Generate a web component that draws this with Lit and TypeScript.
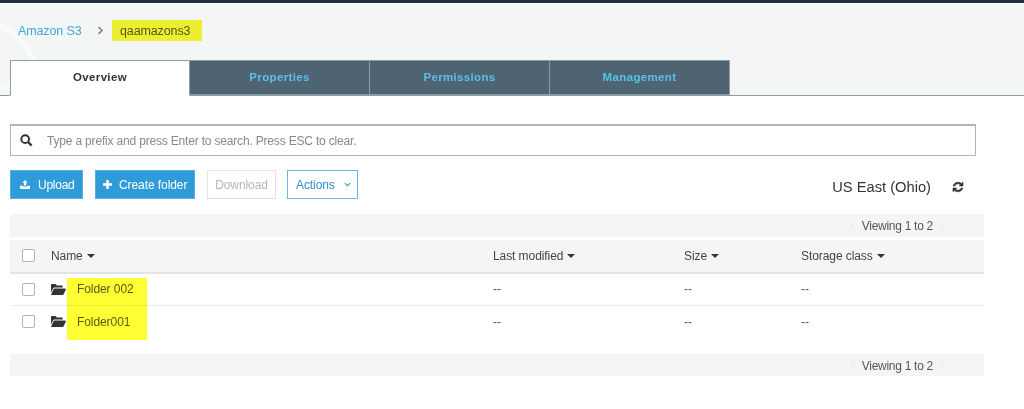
import { LitElement, html, css } from "lit";
import { customElement } from "lit/decorators.js";

const caret = html`<svg class="caret" width="8" height="4" viewBox="0 0 8 4"><path d="M0 0h8L4 4z" fill="#333"/></svg>`;
const folder = html`<svg class="folder" width="15" height="11" viewBox="0 0 15 11"><path d="M0 1.2C0 .5.5 0 1.2 0h3c.6 0 1 .4 1.2 1l.2.5h5c.7 0 1.1.4 1.1 1V3.6H3.6C2.9 3.6 2.3 4 2 4.6L0 8.6z" fill="#333"/><path d="M3.5 4.6H14c.7 0 1.1.6.8 1.2l-2.2 4.4c-.2.5-.7.8-1.2.8H.9c-.6 0-.9-.5-.6-1l2.2-4.7c.2-.4.6-.7 1-.7z" fill="#333"/></svg>`;

@customElement("app-root")
export class AppRoot extends LitElement {
  static styles = css`
    :host { display: block; width: 1024px; height: 409px; overflow: hidden; background: #fff; font-family: "Liberation Sans", Arial, sans-serif; color: #444; position: relative; }
    .topbar { height: 3px; background: #232f3e; }
    .head { background: #f4f6f6; height: 93px; box-sizing: border-box; display: flex; flex-direction: column; border-bottom: 1px solid #8d9ba5; position: relative; }
    .swoosh { position: absolute; left: 0; top: 0; }
    .crumbs { display: flex; align-items: center; height: 57px; padding: 0 0 2px 18px; font-size: 12.5px; letter-spacing: -.12px; box-sizing: border-box; position: relative; }
    .crumbs a { color: #44a5de; width: 79px; }
    .crumbs .sep { width: 15px; display: flex; }
    .crumbs .bucket { color: #5a5a5a; padding-left: 8px; }
    .tabs { display: flex; padding-left: 10px; height: 36px; margin-bottom: -1px; position: relative; }
    .tab { box-sizing: border-box; width: 180px; height: 35px; background: #4f6472; color: #59c1e8; border: 1px solid #8d9ba5; border-left: 0; font-size: 11.5px; font-weight: bold; letter-spacing: .35px; display: flex; align-items: center; justify-content: center; padding-bottom: 2px; }
    .tab.active { background: #fff; color: #333; height: 36px; border: 1px solid #8d9ba5; border-bottom: 1px solid #fff; }
    .search { margin: 28px 48px 0 10px; height: 32px; box-sizing: border-box; border: 1px solid #b4b4b4; border-top-width: 2px; display: flex; align-items: center; padding-left: 9px; font-size: 12px; letter-spacing: -.18px; color: #888; gap: 14.5px; }
    .toolbar { display: flex; align-items: center; margin: 14px 0 0 10px; height: 29px; width: 954px; }
    .btn { box-sizing: border-box; height: 29px; display: flex; align-items: center; font-size: 12px; letter-spacing: -.08px; }
    .primary { background: #2f9bd9; color: #fff; border: 1px solid #5aafe0; }
    .upload { width: 73px; margin-right: 12px; padding-left: 9px; gap: 8px; letter-spacing: -.25px; }
    .create { width: 100px; margin-right: 12px; padding-left: 7px; gap: 7px; }
    .dl { width: 69px; border: 1px solid #e3e3e3; color: #b5b5b5; margin-right: 11px; justify-content: center; }
    .actions { width: 71px; border: 1px solid #6cb6e4; color: #2f8fcf; gap: 9px; padding-left: 8px; }
    .region { margin-left: auto; font-size: 14.7px; color: #333; display: flex; align-items: center; gap: 21px; padding: 5px 0 0 0; }
    .pager { margin: 15px 40px 0 10px; height: 23px; background: #f4f6f6; display: flex; align-items: center; justify-content: flex-end; font-size: 12px; letter-spacing: -.28px; color: #555; padding-right: 39px; gap: 5px; box-sizing: border-box; }
    .pager svg { display: block; }
    .table { margin: 3px 40px 0 10px; font-size: 12px; letter-spacing: -.08px; color: #444; }
    .row { display: grid; grid-template-columns: 41px 442px 191px 117px 1fr; align-items: center; box-sizing: border-box; }
    .row.header { height: 34px; background: #f4f6f6; border-bottom: 2px solid #e2e4e4; padding-bottom: 1px; }
    .row.item { height: 32px; border-bottom: 1px solid #eaeaea; color: #444; padding-bottom: 1px; }
    .row.item:last-child { border-bottom: 0; }
    .check { width: 13px; height: 13px; margin-left: 12px; box-sizing: border-box; border: 1.5px solid #b4b4b4; border-radius: 2px; background: #fff; }
    .cell { display: flex; align-items: center; gap: 4px; }
    .name { gap: 11px; }
    .name span { color: #5a5a5a; }
    .dash { color: #555; }
    .pager.bottom { margin-top: 16px; height: 22px; padding-top: 1px; }
    .hl { position: absolute; background: #ffff33; mix-blend-mode: multiply; }
    .hl.one { left: 112px; top: 20px; width: 90px; height: 21px; background: #f7f733; }
    .hl.two { left: 67px; top: 278px; width: 80px; height: 62px; }
  `;

  private row(name: string) {
    return html`<div class="row item">
      <span class="check"></span>
      <span class="cell name">${folder}<span>${name}</span></span>
      <span class="dash">--</span><span class="dash">--</span><span class="dash">--</span>
    </div>`;
  }

  private pager(extra = "") {
    const ch = (d: string) => html`<svg width="7" height="11" viewBox="0 0 7 11"><path d="${d}" fill="none" stroke="#eceeee" stroke-width="1.4"/></svg>`;
    return html`<div class="pager ${extra}">${ch("M5.5 1 1.5 5.5 5.5 10")}<span>Viewing 1 to 2</span>${ch("M1.5 1 5.5 5.5 1.5 10")}</div>`;
  }

  render() {
    return html`
      <div class="topbar"></div>
      <div class="head">
        <svg class="swoosh" width="60" height="92" viewBox="0 0 60 92"><path d="M0 22C14 30 26 42 34 57M0 86 12 80" fill="none" stroke="#fff" stroke-opacity=".45" stroke-width="5"/></svg>
        <div class="crumbs">
          <a>Amazon S3</a>
          <span class="sep"><svg width="7" height="9" viewBox="0 0 7 9"><path d="M1.500 1 5 4.500 1.500 8" fill="none" stroke="#777" stroke-width="1.400"/></svg></span>
          <span class="bucket">qaamazons3</span>
        </div>
        <div class="tabs">
          <div class="tab active">Overview</div>
          <div class="tab">Properties</div>
          <div class="tab">Permissions</div>
          <div class="tab">Management</div>
        </div>
      </div>
      <div class="search">
        <svg width="12.500" height="12.500" viewBox="0 0 14 14"><circle cx="5.800" cy="5.800" r="4.300" fill="none" stroke="#333" stroke-width="2.200"/><path d="M9 9l4 4" stroke="#333" stroke-width="2.600"/></svg>
        <span>Type a prefix and press Enter to search. Press ESC to clear.</span>
      </div>
      <div class="toolbar">
        <div class="btn primary upload"><svg width="10" height="11" viewBox="0 0 13 12"><path d="M6.500 0 10 3.600H8v3.600H5V3.600H3z" fill="#fff"/><path d="M0 7.500h3.800v1h5.400v-1H13V11c0 .6-.4 1-1 1H1c-.6 0-1-.4-1-1z" fill="#fff"/></svg><span>Upload</span></div>
        <div class="btn primary create"><svg width="9" height="9" viewBox="0 0 11 11"><path d="M4 0h3v4h4v3H7v4H4V7H0V4h4z" fill="#fff"/></svg><span>Create folder</span></div>
        <div class="btn dl">Download</div>
        <div class="btn actions"><span>Actions</span><svg width="7" height="5" viewBox="0 0 8 5"><path d="M1 1l3 3 3-3" fill="none" stroke="#2f8fcf" stroke-width="1.200"/></svg></div>
        <div class="region"><span>US East (Ohio)</span><svg width="12" height="12" viewBox="0 0 12 12"><path d="M1.200 5C1.700 2.700 3.700 1.200 6 1.200c1.400 0 2.600.5 3.500 1.400L11 1.200V5H7.300l1.200-1.200C7.800 3.200 7 2.800 6 2.800 4.500 2.800 3.200 3.700 2.800 5zM10.800 7c-.5 2.300-2.500 3.800-4.800 3.800-1.400 0-2.600-.5-3.500-1.400L1 10.800V7h3.700L3.500 8.200c.7.6 1.500 1 2.500 1 1.500 0 2.800-.9 3.200-2.200z" fill="#333" stroke="#333" stroke-width=".6"/></svg></div>
      </div>
      ${this.pager()}
      <div class="table">
        <div class="row header">
          <span class="check"></span>
          <span class="cell">Name ${caret}</span>
          <span class="cell">Last modified ${caret}</span>
          <span class="cell">Size ${caret}</span>
          <span class="cell">Storage class ${caret}</span>
        </div>
        ${this.row("Folder 002")}
        ${this.row("Folder001")}
      </div>
      ${this.pager("bottom")}
      <div class="hl one"></div>
      <div class="hl two"></div>
    `;
  }
}
